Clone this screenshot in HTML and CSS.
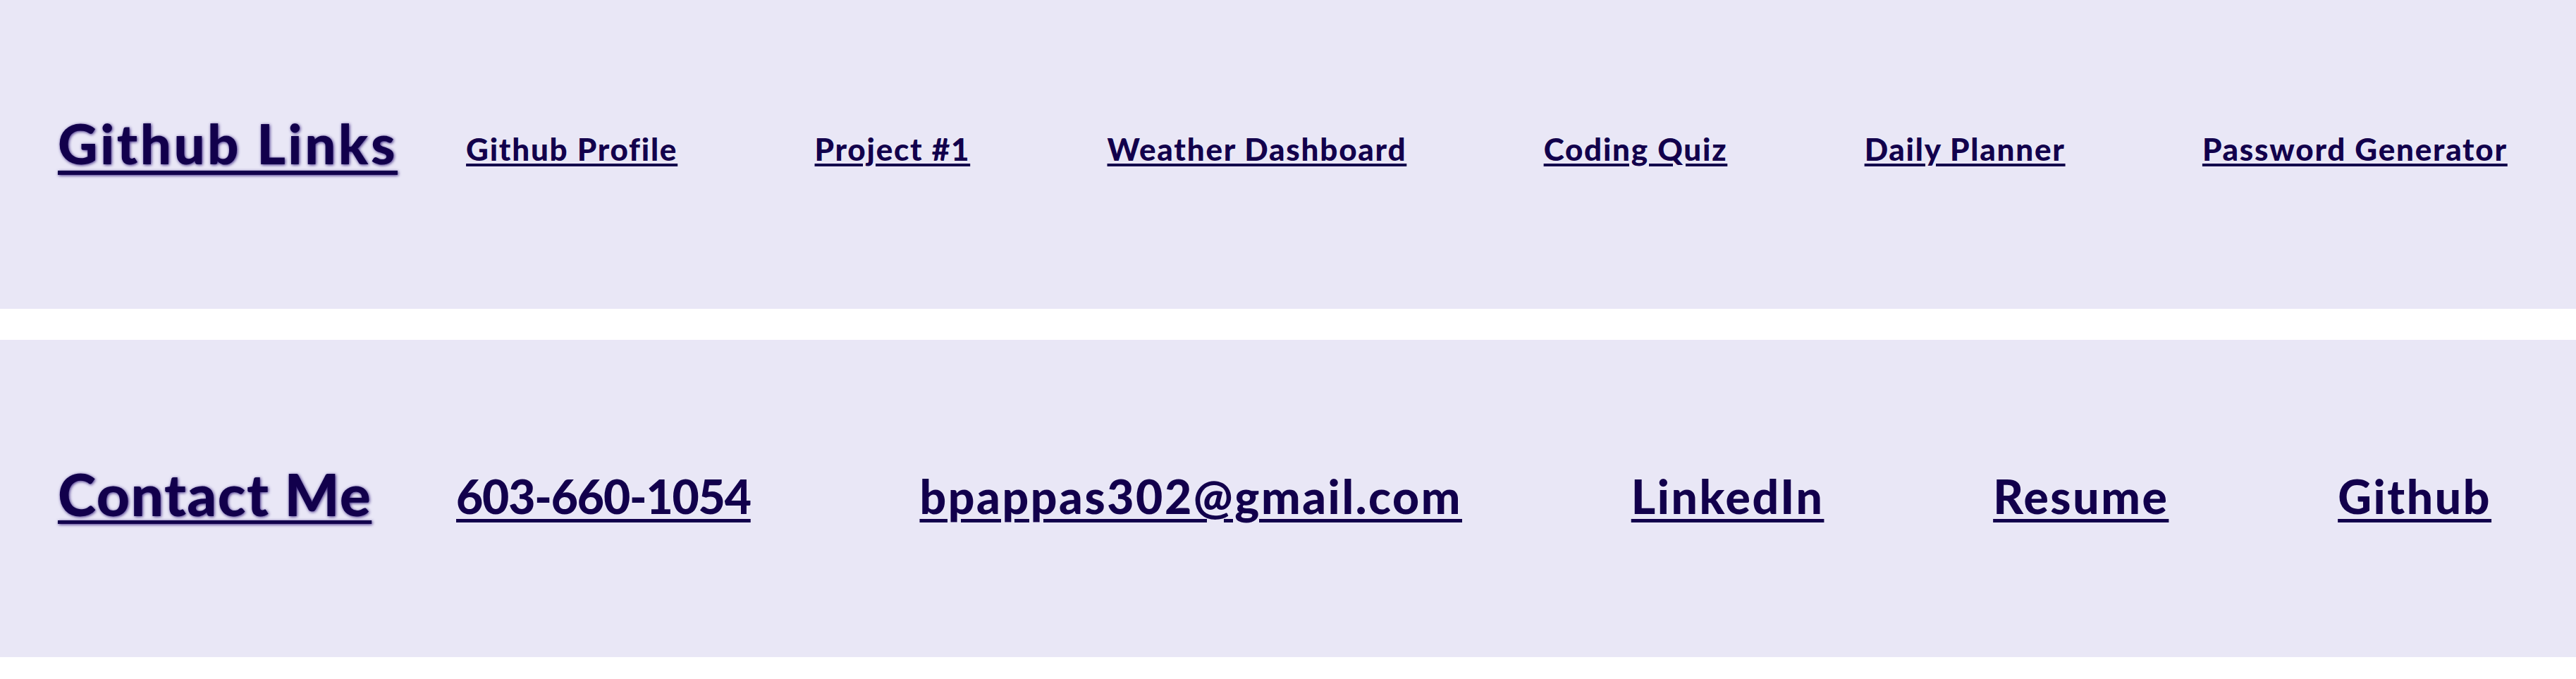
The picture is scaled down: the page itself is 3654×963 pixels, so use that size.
FILE: index.html
```html
<!DOCTYPE html>
<html lang="en">
<head>
<meta charset="utf-8">
<title>Portfolio Links</title>
<link rel="stylesheet" href="styles.css">
</head>
<body>
<header class="band band-github">
  <h1 class="band-title">Github Links</h1>
  <nav class="band-links band-links-small">
    <a href="#">Github Profile</a>
    <a href="#">Project #1</a>
    <a href="#">Weather Dashboard</a>
    <a href="#">Coding Quiz</a>
    <a href="#">Daily Planner</a>
    <a href="#">Password Generator</a>
  </nav>
</header>
<section class="band band-contact">
  <h2 class="band-title band-title-contact">Contact Me</h2>
  <nav class="band-links band-links-large">
    <a class="link-phone" href="#">603-660-1054</a>
    <a href="#">bpappas302@gmail.com</a>
    <a href="#">LinkedIn</a>
    <a href="#">Resume</a>
    <a href="#">Github</a>
  </nav>
</section>
</body>
</html>
```
FILE: styles.css
```css
html, body {
  margin: 0;
  padding: 0;
  background: #ffffff;
}

body {
  font-family: Lato, "Liberation Sans", sans-serif;
  color: #12004c;
}

.band {
  display: flex;
  align-items: center;
  box-sizing: border-box;
  background: #e9e7f6;
  padding-left: 82px;
}

.band-github {
  height: 438px;
  padding-bottom: 16px;
}

.band-contact {
  height: 450px;
  margin-top: 44px;
  padding-bottom: 7px;
}

.band-title {
  margin: 0 0 14px 0;
  font-size: 78px;
  font-weight: 900;
  letter-spacing: 3.5px;
  line-height: 1.2;
  text-decoration: underline;
  text-decoration-thickness: 6px;
  text-underline-offset: 9px;
  text-shadow: 1px 1px 4px #3a2580;
  white-space: nowrap;
}

.band-title-contact {
  font-size: 82px;
  letter-spacing: 1.5px;
  margin-bottom: 7px;
  text-decoration-thickness: 5px;
  text-underline-offset: 6px;
}

.band-links {
  flex: 1;
  display: flex;
  justify-content: space-around;
  align-items: center;
}

.band-links a {
  color: inherit;
  font-weight: 900;
  line-height: 1.2;
  white-space: nowrap;
  text-decoration: underline;
}

.band-links-small a {
  font-size: 44px;
  letter-spacing: 1.75px;
  text-decoration-thickness: 4px;
  text-underline-offset: 4px;
}

.band-links-large a {
  font-size: 66px;
  letter-spacing: 2.6px;
  text-decoration-thickness: 5px;
  text-underline-offset: 7px;
}

.band-links-large .link-phone {
  letter-spacing: -1.2px;
}
```
